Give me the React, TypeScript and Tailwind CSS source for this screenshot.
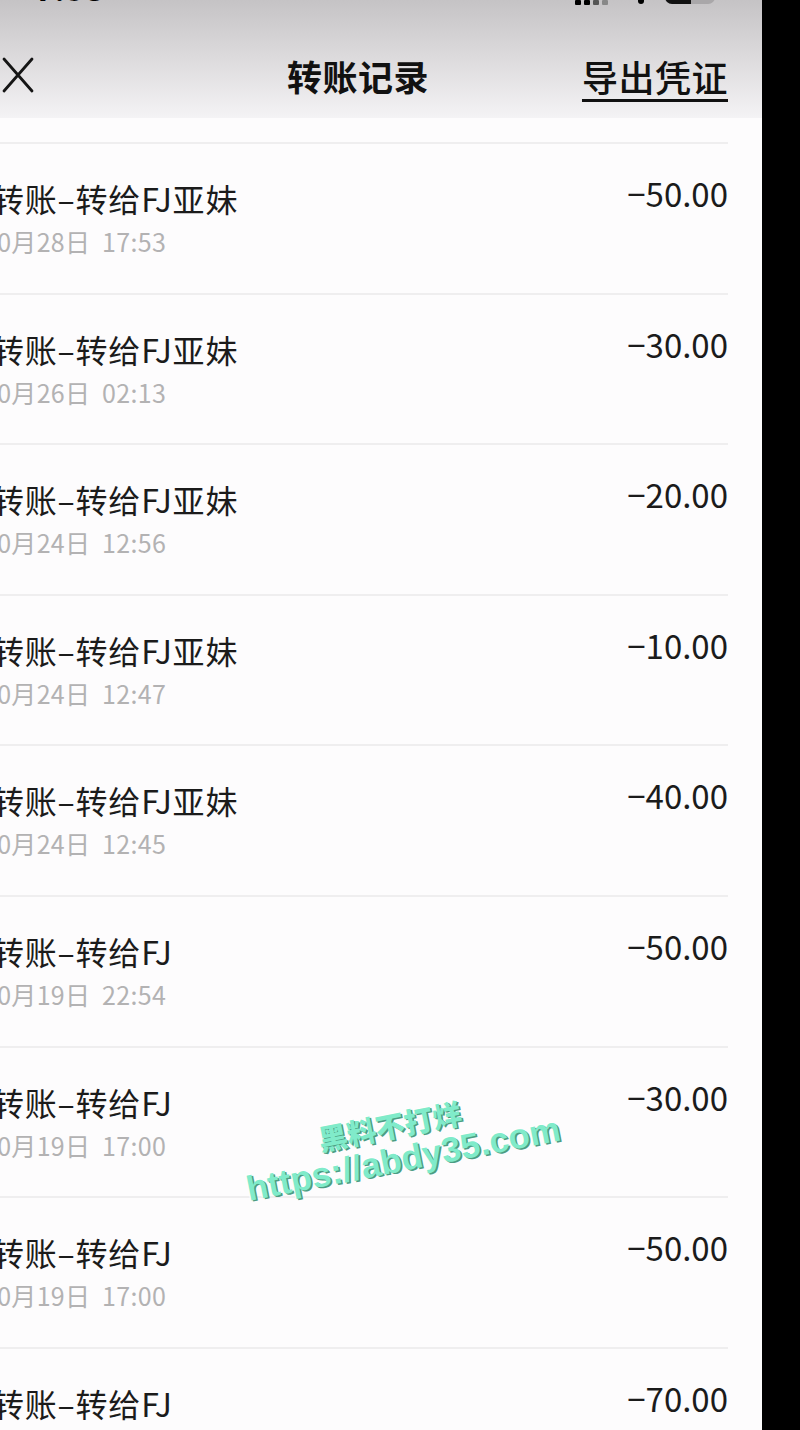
import React from "react";

const rows = [
  { t: "转账–转给FJ亚妹", d: "10月28日 17:53", a: "−50.00" },
  { t: "转账–转给FJ亚妹", d: "10月26日 02:13", a: "−30.00" },
  { t: "转账–转给FJ亚妹", d: "10月24日 12:56", a: "−20.00" },
  { t: "转账–转给FJ亚妹", d: "10月24日 12:47", a: "−10.00" },
  { t: "转账–转给FJ亚妹", d: "10月24日 12:45", a: "−40.00" },
  { t: "转账–转给FJ", d: "10月19日 22:54", a: "−50.00" },
  { t: "转账–转给FJ", d: "10月19日 17:00", a: "−30.00" },
  { t: "转账–转给FJ", d: "10月19日 17:00", a: "−50.00" },
  { t: "转账–转给FJ", d: "10月19日 17:00", a: "−70.00" },
];

const font = { fontFamily: '"Noto Sans CJK SC", "Noto Sans", sans-serif' };

export default function App() {
  return (
    <div className="flex w-[800px] h-[1430px] overflow-hidden bg-black" style={font}>
      <div className="relative w-[762px] h-full overflow-hidden bg-[#fdfcfd]">
        <div className="w-[808px] -ml-[46px] flex flex-col">
          {/* header */}
          <div className="h-[118px] flex flex-col bg-gradient-to-b from-[#c5c3c5] via-[#dddbdd] to-[#f4f3f5]">
            <div className="relative h-[10px] overflow-hidden">
              <span className="absolute left-[80px] -top-[30px] text-[34px] font-bold text-black leading-[34px]">7:53</span>
              <div className="absolute left-[621px] top-0 flex items-end gap-[3px]">
                <div className="w-[6px] h-[5px] bg-black rounded-[1px]" />
                <div className="w-[6px] h-[5px] bg-black rounded-[1px]" />
                <div className="w-[6px] h-[5px] bg-[#555] rounded-[1px]" />
                <div className="w-[6px] h-[5px] bg-[#888] rounded-[1px]" />
              </div>
              <div className="absolute left-[684px] -top-[4px] w-[6px] h-[8px] rounded-full bg-black" />
              <div className="absolute left-[711px] -top-[20px] w-[50px] h-[24px] rounded-[7px] bg-[#a9a7a9] overflow-hidden">
                <div className="w-[26px] h-full bg-[#111]" />
              </div>
            </div>
            <div className="flex-1 relative flex items-center">
              <svg className="absolute left-[48px] top-[47px]" width="32" height="36" viewBox="0 0 32 36">
                <path d="M2 2 L30 34 M30 2 L2 34" stroke="#151515" strokeWidth="2.8" strokeLinecap="round" />
              </svg>
              <div className="absolute left-0 right-0 top-[43px] flex justify-center">
                <span className="text-[35px] font-bold text-[#111] leading-[46px] tracking-[0.5px]">转账记录</span>
              </div>
              <span className="absolute right-[34px] top-[43px] text-[36px] text-[#111] leading-[46px] underline underline-offset-[7px] decoration-[2.5px] font-medium tracking-[0.5px]">导出凭证</span>
            </div>
          </div>
          {/* list */}
          <div className="h-[24px]" />
          <div className="pl-[38px] pr-[34px] flex flex-col">
            {rows.map((r, i) => (
              <div key={i} className="h-[150.6px] border-t-[2px] border-[#efeeef] relative">
                <div className="absolute left-[0px] top-[34px] text-[32px] leading-[40px] text-[#1b1b1b] tracking-[0.8px]">{r.t}</div>
                <div className="absolute left-[-9px] top-[82px] text-[25px] leading-[30px] text-[#b3b2b3] tracking-[0.3px] whitespace-pre">{r.d.replace(" ", "  ")}</div>
                <div className="absolute right-0 top-[29px] text-[33px] leading-[40px] text-[#1b1b1b]">{r.a}</div>
              </div>
            ))}
          </div>
        </div>
        {/* watermark */}
        <div className="absolute left-[242px] top-[1106px] w-[316px] -rotate-[11deg] flex flex-col items-center text-[#80ebca] font-black [text-shadow:1.5px_1.5px_0_#4d9c82,-1px_-1px_0_#ffffff]">
          <span className="text-[29px] leading-[34px] mr-[14px]" style={{ fontFamily: '"Noto Sans CJK SC", sans-serif' }}>黑料不打烊</span>
          <span className="text-[35px] leading-[38px] whitespace-nowrap font-bold" style={{ fontFamily: '"Liberation Sans", Arial, sans-serif' }}>https://abdy35.com</span>
        </div>
      </div>
      <div className="flex-1 bg-black" />
    </div>
  );
}
